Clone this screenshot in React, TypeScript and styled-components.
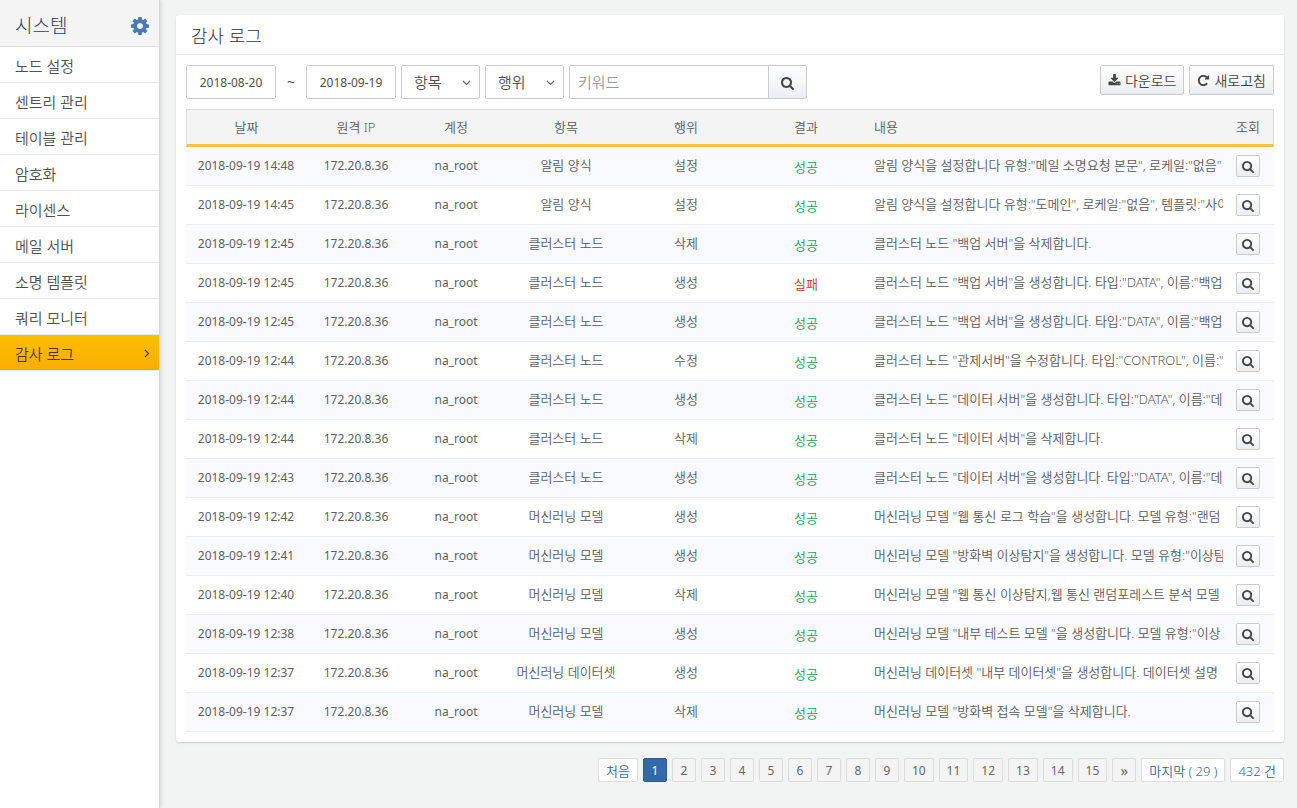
import React from "react";
import styled, { createGlobalStyle, css } from "styled-components";

const GlobalStyle = createGlobalStyle`
  *, *::before, *::after { box-sizing: border-box; }
  body {
    margin: 0;
    background: #f2f4f4;
    color: #505050;
    font-family: "Noto Sans", "Noto Sans CJK KR", sans-serif;
    font-size: 13px;
    font-weight: 350;
  }
  button, input, select { font: inherit; color: inherit; margin: 0; }
`;

const Page = styled.div`
  display: flex;
  min-height: 100vh;
`;

const Sidebar = styled.aside`
  flex: none;
  width: 160px;
  background: #fff;
  border-right: 1px solid #d8d8d8;
  box-shadow: 1px 0 5px rgba(0, 0, 0, 0.12);
`;

const SidebarHeader = styled.div`
  display: flex;
  align-items: center;
  justify-content: space-between;
  height: 47px;
  padding: 5px 10px 0 15px;
  background: #f4f4f4;
  border-bottom: 1px solid #ddd;
`;

const SidebarTitle = styled.h1`
  margin: 0;
  font-size: 19px;
  line-height: 24px;
  font-weight: 300;
  color: #1f3c66;
`;

const IconButton = styled.button`
  display: flex;
  padding: 0;
  border: 0;
  background: none;
  color: #4a7ab5;
  cursor: pointer;
`;

const Menu = styled.ul`
  margin: 0;
  padding: 0;
  list-style: none;
`;

const MenuLink = styled.a<{ $active?: boolean }>`
  display: flex;
  align-items: center;
  justify-content: space-between;
  height: 36px;
  padding: 2px 9px 0 15px;
  border-bottom: 1px solid #e8e8e8;
  font-size: 15px;
  line-height: 20px;
  color: #505050;
  text-decoration: none;
  ${(p) =>
    p.$active &&
    css`
      color: #4a3a1c;
      background: linear-gradient(#fcbf00, #fbac03);
    `}
`;

const Main = styled.main`
  flex: 1;
  min-width: 0;
  padding: 15px 13px 20px 16px;
`;

const Card = styled.section`
  background: #fff;
  border-radius: 3px;
  box-shadow: 0 1px 2px rgba(0, 0, 0, 0.15);
`;

const CardTitle = styled.h2`
  margin: 0;
  padding: 9px 15px 6px;
  border-bottom: 1px solid #e9e9e9;
  font-size: 18px;
  line-height: 24px;
  font-weight: 300;
  color: #333;
`;

const CardBody = styled.div`
  padding: 10px;
`;

const Toolbar = styled.div`
  display: flex;
  align-items: flex-start;
  justify-content: space-between;
  margin-bottom: 10px;
`;

const Group = styled.div`
  display: flex;
  gap: 5px;
`;

const fieldBox = css`
  height: 34px;
  border: 1px solid #ccc;
  border-radius: 2px;
  background: #fff;
  outline: none;
`;

const DateInput = styled.input`
  ${fieldBox}
  width: 90px;
  padding: 0;
  text-align: center;
  font-size: 12px;
  font-weight: 400;
`;

const Tilde = styled.span`
  width: 20px;
  line-height: 34px;
  text-align: center;
  font-size: 14px;
  font-weight: 400;
`;

const SelectWrap = styled.span`
  position: relative;
  display: flex;
  svg {
    position: absolute;
    right: 9px;
    top: 15px;
    pointer-events: none;
  }
`;

const Select = styled.select`
  ${fieldBox}
  appearance: none;
  width: 79px;
  padding: 0 24px 0 12px;
  font-size: 15px;
`;

const SearchBox = styled.form`
  display: flex;
`;

const Keyword = styled.input`
  ${fieldBox}
  width: 200px;
  padding: 0 8px;
  font-size: 15px;
  border-radius: 2px 0 0 2px;
  &::placeholder { color: #999; opacity: 1; }
`;

const Button = styled.button`
  display: flex;
  align-items: center;
  justify-content: center;
  gap: 4px;
  height: 30px;
  padding: 0 7px;
  border: 1px solid #ccc;
  border-radius: 2px;
  background: linear-gradient(#fff, #ebeef1);
  color: #444;
  font-size: 14px;
  cursor: pointer;
`;

const SearchButton = styled(Button)`
  width: 39px;
  height: 34px;
  padding: 2px 0 0;
  margin-left: -1px;
  border-radius: 0 2px 2px 0;
`;

const ViewButton = styled(Button)`
  width: 24px;
  height: 22px;
  padding: 2px 0 0;
`;

const Table = styled.table`
  width: 100%;
  table-layout: fixed;
  border-collapse: separate;
  border-spacing: 0;
  color: #5a5a5a;
`;

const HeadRow = styled.tr`
  background: #f4f4f4;
`;

const Th = styled.th<{ $w?: number; $left?: boolean }>`
  width: ${(p) => (p.$w ? `${p.$w}px` : "auto")};
  height: 38px;
  padding: ${(p) => (p.$left ? "0 0 1px 8px" : "0 0 1px")};
  border-top: 1px solid #ddd;
  border-bottom: 3px solid #f9c33c;
  font-weight: 350;
  text-align: ${(p) => (p.$left ? "left" : "center")};
  &:first-child { border-left: 1px solid #ddd; }
  &:last-child { border-right: 1px solid #ddd; }
`;

const Row = styled.tr`
  &:nth-child(odd) { background: #f9faff; }
`;

const Td = styled.td<{ $tone?: string }>`
  height: 39px;
  padding: 0 0 3px;
  border-bottom: 1px solid #eee;
  text-align: center;
  color: ${(p) => p.$tone || "inherit"};
`;

const LatinTd = styled(Td)`
  padding-bottom: 2px;
  font-size: 12px;
  font-weight: 400;
  color: #606060;
`;

const StatusTd = styled(Td)`
  padding: 0;
`;

const TextTd = styled(Td)`
  padding-left: 8px;
  text-align: left;
`;

const Clip = styled.div`
  overflow: hidden;
  white-space: nowrap;
`;

const ActionTd = styled(Td)`
  padding: 0 0 0 13px;
`;

const Pager = styled.nav`
  display: flex;
  justify-content: flex-end;
  gap: 5px;
  margin-top: 16px;
`;

const PageButton = styled.button<{ $current?: boolean }>`
  min-width: 24px;
  height: 24px;
  padding: 1px 7px 0;
  border: 1px solid #ddd;
  border-radius: 2px;
  background: #f4f4f4;
  color: #666;
  font-size: 12px;
  font-weight: 400;
  line-height: 20px;
  cursor: pointer;
  ${(p) =>
    p.$current &&
    css`
      background: #3369a7;
      border-color: #2b5c95;
      color: #fff;
    `}
`;

const NextButton = styled(PageButton)`
  padding: 0 7px;
  font-size: 15px;
`;

const EdgeButton = styled(PageButton)`
  background: #fff;
  color: #2f66a5;
  font-size: 13px;
  font-weight: 350;
`;

const icons = {
  cog: "M1152 896q0-106-75-181t-181-75-181 75-75 181 75 181 181 75 181-75 75-181zm512-109v222q0 12-8 23t-20 13l-185 28q-19 54-39 91 35 50 107 138 10 12 10 25t-9 23q-27 37-99 108t-94 71q-12 0-26-9l-138-108q-44 23-91 38-16 136-29 186-7 28-36 28h-222q-14 0-24.500-8.500t-11.500-21.500l-28-184q-49-16-90-37l-141 107q-10 9-25 9-14 0-25-11-126-114-165-168-7-10-7-23 0-12 8-23 15-21 51-66.500t54-70.500q-27-50-41-99l-183-27q-13-2-21-12.500t-8-23.500v-222q0-12 8-23t19-13l186-28q14-46 39-92-40-57-107-138-10-12-10-24 0-10 9-23 26-36 98.500-107.500t94.500-71.500q13 0 26 10l138 107q44-23 91-38 16-136 29-186 7-28 36-28h222q14 0 24.500 8.500t11.500 21.500l28 184q49 16 90 37l142-107q9-9 24-9 13 0 25 10 129 119 165 170 7 8 7 22 0 12-8 23-15 21-51 66.500t-54 70.500q26 50 41 98l183 28q13 2 21 12.500t8 23.500z",
  search:
    "M1152 704q0-185-131.500-316.500t-316.500-131.500-316.500 131.500-131.500 316.500 131.500 316.500 316.500 131.500 316.500-131.500 131.500-316.500zM1664 1536q0 52-38 90t-90 38q-54 0-90-38l-343-342q-179 124-399 124-143 0-273.500-55.500t-225-150-150-225-55.500-273.500 55.500-273.500 150-225 225-150 273.500-55.500 273.500 55.500 225 150 150 225 55.500 273.500q0 220-124 399l343 343q37 37 37 90z",
  download:
    "M1344 1344q0-26-19-45t-45-19-45 19-19 45 19 45 45 19 45-19 19-45zm256 0q0-26-19-45t-45-19-45 19-19 45 19 45 45 19 45-19 19-45zm128-224v320q0 40-28 68t-68 28h-1472q-40 0-68-28t-28-68v-320q0-40 28-68t68-28h465l135 136q58 56 136 56t136-56l136-136h464q40 0 68 28t28 68zm-325-569q17 41-14 70l-448 448q-18 19-45 19t-45-19l-448-448q-31-29-14-70 17-39 59-39h256v-448q0-26 19-45t45-19h256q26 0 45 19t19 45v448h256q42 0 59 39z",
  refresh:
    "M1664 256v448q0 26-19 45t-45 19h-448q-42 0-59-40-17-39 14-69l138-138q-148-137-349-137-104 0-198.500 40.500t-163.500 109.500-109.500 163.500-40.500 198.500 40.500 198.500 109.500 163.500 163.500 109.500 198.500 40.500q119 0 225-52t179-147q7-10 23-12 15 0 25 9l137 138q9 8 9.500 20.500t-7.500 22.500q-109 132-264 204.500t-327 72.500q-156 0-298-61t-245-164-164-245-61-298 61-298 164-245 245-164 298-61q147 0 284.500 55.500t244.500 156.500l130-129q29-31 70-14 39 17 39 59z",
};

function Icon({ name, size, box = "0 0 1792 1792" }: { name: keyof typeof icons; size: number; box?: string }) {
  return (
    <svg width={size} height={size} viewBox={box} fill="currentColor" aria-hidden="true">
      <path d={icons[name]} />
    </svg>
  );
}

function Chevron({ down }: { down?: boolean }) {
  return down ? (
    <svg width="9" height="6" viewBox="0 0 9 6" fill="none" stroke="#666" strokeWidth="1.2" aria-hidden="true">
      <path d="M1 1l3.500 3.500L8 1" />
    </svg>
  ) : (
    <svg width="6" height="9" viewBox="0 0 6 9" fill="none" stroke="currentColor" strokeWidth="1.2" aria-hidden="true">
      <path d="M1 1l3.500 3.500L1 8" />
    </svg>
  );
}

const menu = ["노드 설정", "센트리 관리", "테이블 관리", "암호화", "라이센스", "메일 서버", "소명 템플릿", "쿼리 모니터", "감사 로그"];

const logs: [string, string, string, boolean, string][] = [
  ["14:48", "알림 양식", "설정", true, '알림 양식을 설정합니다 유형:"메일 소명요청 본문", 로케일:"없음"'],
  ["14:45", "알림 양식", "설정", true, '알림 양식을 설정합니다 유형:"도메인", 로케일:"없음", 템플릿:"사이'],
  ["12:45", "클러스터 노드", "삭제", true, '클러스터 노드 "백업 서버"을 삭제합니다.'],
  ["12:45", "클러스터 노드", "생성", false, '클러스터 노드 "백업 서버"을 생성합니다. 타입:"DATA", 이름:"백업'],
  ["12:45", "클러스터 노드", "생성", true, '클러스터 노드 "백업 서버"을 생성합니다. 타입:"DATA", 이름:"백업'],
  ["12:44", "클러스터 노드", "수정", true, '클러스터 노드 "관제서버"을 수정합니다. 타입:"CONTROL", 이름:"'],
  ["12:44", "클러스터 노드", "생성", true, '클러스터 노드 "데이터 서버"을 생성합니다. 타입:"DATA", 이름:"데'],
  ["12:44", "클러스터 노드", "삭제", true, '클러스터 노드 "데이터 서버"을 삭제합니다.'],
  ["12:43", "클러스터 노드", "생성", true, '클러스터 노드 "데이터 서버"을 생성합니다. 타입:"DATA", 이름:"데'],
  ["12:42", "머신러닝 모델", "생성", true, '머신러닝 모델 "웹 통신 로그 학습"을 생성합니다. 모델 유형:"랜덤'],
  ["12:41", "머신러닝 모델", "생성", true, '머신러닝 모델 "방화벽 이상탐지"을 생성합니다. 모델 유형:"이상탐'],
  ["12:40", "머신러닝 모델", "삭제", true, '머신러닝 모델 "웹 통신 이상탐지,웹 통신 랜덤포레스트 분석 모델'],
  ["12:38", "머신러닝 모델", "생성", true, '머신러닝 모델 "내부 테스트 모델 "을 생성합니다. 모델 유형:"이상'],
  ["12:37", "머신러닝 데이터셋", "생성", true, '머신러닝 데이터셋 "내부 데이터셋"을 생성합니다. 데이터셋 설명'],
  ["12:37", "머신러닝 모델", "삭제", true, '머신러닝 모델 "방화벽 접속 모델"을 삭제합니다.'],
];

const pages = Array.from({ length: 15 }, (_, i) => i + 1);

export default function App() {
  return (
    <>
      <GlobalStyle />
      <Page>
        <Sidebar>
          <SidebarHeader>
            <SidebarTitle>시스템</SidebarTitle>
            <IconButton aria-label="설정">
              <Icon name="cog" size={18} box="128 128 1536 1536" />
            </IconButton>
          </SidebarHeader>
          <Menu>
            {menu.map((label) => {
              const active = label === "감사 로그";
              return (
                <li key={label}>
                  <MenuLink href="#" $active={active} aria-current={active ? "page" : undefined}>
                    {label}
                    {active && <Chevron />}
                  </MenuLink>
                </li>
              );
            })}
          </Menu>
        </Sidebar>
        <Main>
          <Card>
            <CardTitle>감사 로그</CardTitle>
            <CardBody>
              <Toolbar>
                <Group>
                  <DateInput aria-label="시작일" defaultValue="2018-08-20" />
                  <Tilde>~</Tilde>
                  <DateInput aria-label="종료일" defaultValue="2018-09-19" />
                  <SelectWrap>
                    <Select aria-label="항목">
                      <option>항목</option>
                    </Select>
                    <Chevron down />
                  </SelectWrap>
                  <SelectWrap>
                    <Select aria-label="행위">
                      <option>행위</option>
                    </Select>
                    <Chevron down />
                  </SelectWrap>
                  <SearchBox onSubmit={(e) => e.preventDefault()}>
                    <Keyword aria-label="키워드" placeholder="키워드" />
                    <SearchButton aria-label="검색">
                      <Icon name="search" size={13} box="0 0 1664 1664" />
                    </SearchButton>
                  </SearchBox>
                </Group>
                <Group>
                  <Button>
                    <Icon name="download" size={13} />
                    다운로드
                  </Button>
                  <Button>
                    <Icon name="refresh" size={13} />
                    새로고침
                  </Button>
                </Group>
              </Toolbar>
              <Table>
                <thead>
                  <HeadRow>
                    <Th $w={120}>날짜</Th>
                    <Th $w={100}>원격 IP</Th>
                    <Th $w={100}>계정</Th>
                    <Th $w={120}>항목</Th>
                    <Th $w={120}>행위</Th>
                    <Th $w={120}>결과</Th>
                    <Th $left>내용</Th>
                    <Th $w={51}>조회</Th>
                  </HeadRow>
                </thead>
                <tbody>
                  {logs.map(([time, item, action, ok, text], i) => (
                    <Row key={i}>
                      <LatinTd>2018-09-19 {time}</LatinTd>
                      <LatinTd>172.20.8.36</LatinTd>
                      <LatinTd>na_root</LatinTd>
                      <Td>{item}</Td>
                      <Td>{action}</Td>
                      <StatusTd $tone={ok ? "#1f9d55" : "#b83227"}>{ok ? "성공" : "실패"}</StatusTd>
                      <TextTd>
                        <Clip>{text}</Clip>
                      </TextTd>
                      <ActionTd>
                        <ViewButton aria-label="조회">
                          <Icon name="search" size={12} box="0 0 1664 1664" />
                        </ViewButton>
                      </ActionTd>
                    </Row>
                  ))}
                </tbody>
              </Table>
            </CardBody>
          </Card>
          <Pager aria-label="페이지">
            <EdgeButton>처음</EdgeButton>
            {pages.map((n) => (
              <PageButton key={n} $current={n === 1}>
                {n}
              </PageButton>
            ))}
            <NextButton>»</NextButton>
            <EdgeButton>마지막 ( 29 )</EdgeButton>
            <EdgeButton>432 건</EdgeButton>
          </Pager>
        </Main>
      </Page>
    </>
  );
}
